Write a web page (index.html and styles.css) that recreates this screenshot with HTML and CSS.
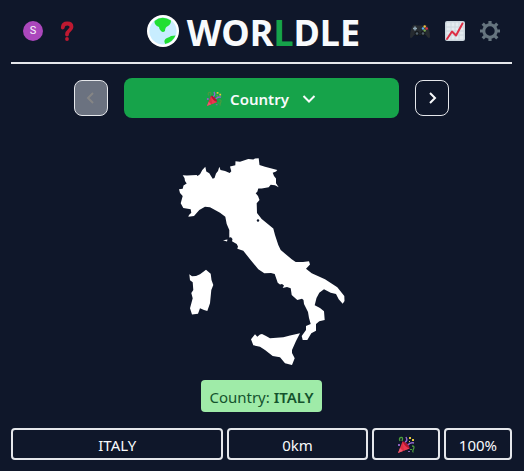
FILE: index.html
```html
<!DOCTYPE html>
<html lang="en">
<head>
<meta charset="utf-8">
<meta name="viewport" content="width=device-width, initial-scale=1">
<title>Worldle</title>
<link rel="stylesheet" href="styles.css">
</head>
<body>
<svg class="defs" aria-hidden="true">
  <symbol id="party" viewBox="0 0 18 18">
    <path d="M1 17 5.500 5.500Q10 8 12.500 12.500Z" fill="#dd2e44"/>
    <path d="M1 17 3 12 6 15Z" fill="#ea596e"/>
    <path d="M5.500 5.500Q8 5 10.500 8T12.500 12.500Q9 12 7 9T5.500 5.500" fill="#b4152f"/>
    <path d="M5.500 5.500 7 14.500 12.500 12.500Q8 11 5.500 5.500" fill="#ea3850"/>
    <path d="M3 5Q1.500 2 4 1.500T5 5M15 10q3 0 1.500 3t0 3" fill="none" stroke="#4b9b3f" stroke-width="1.300"/>
    <path d="M8 6Q11 5 9 1M11 9q2-3 6-2" fill="none" stroke="#9266cc" stroke-width="1.500"/>
    <path d="M12 1h2v2h-2zM15 3h2v2h-2zM12 5h1v1h-1z" fill="#e5c83c"/>
    <path d="M1 8h2v2H1zM11 15h2v1h-2z" fill="#8b62bd"/>
    <path d="M13 13h2v1h-2z" fill="#4b9b3f"/>
  </symbol>
</svg>
<div class="page">
  <header class="header">
    <div class="tools">
      <button class="avatar" aria-label="Account">S</button>
      <button class="icon-button" aria-label="Help">
        <svg class="icon" viewBox="0 0 20 20"><path d="M5.800 6.500Q6 2.500 10.300 2.500Q14.500 2.500 14.500 6C14.500 9.500 10 9.300 10 13.500" fill="none" stroke="#be1931" stroke-width="3.800" stroke-linecap="round"/><circle cx="10" cy="18" r="1.900" fill="#be1931"/></svg>
      </button>
    </div>
    <h1 class="title">
      <svg class="globe" viewBox="0 0 32 32" aria-hidden="true"><circle cx="16" cy="16" r="16" fill="#fff"/><circle cx="16" cy="16" r="13.600" fill="#c8edff"/><path d="M7.500 6Q15 0 24 5.500Q24 9 21 11Q18 12 18 16Q16 18 14 16Q12 14 12 12Q7 10 7.500 6M18 28.500Q16 25 20 23Q23 22 24 21L28.500 20.500Q26 27 18 29Z" fill="#20df32"/></svg>
      <span class="wordmark">WOR<span class="accent">L</span>DLE</span>
    </h1>
    <div class="tools tools-end">
      <button class="icon-button" aria-label="Games">
        <svg class="icon" viewBox="0 0 20 20"><path d="M3 4.500Q5 2.800 7 4.500H13Q15 2.800 17 4.500Q20 9 20 16Q19 19 16 14H4Q1 19 0 16Q0 9 3 4.500" fill="#262b30"/><circle cx="7" cy="12.500" r="2.500" fill="#15191d"/><circle cx="13" cy="12.500" r="2.500" fill="#15191d"/><circle cx="7" cy="12.500" r="1.300" fill="#52606b"/><circle cx="13" cy="12.500" r="1.300" fill="#52606b"/><path d="M5 5.500V9.500M3 7.500H7" stroke="#8da4b2" stroke-width="1.500"/><circle cx="14.700" cy="5.500" r="1.200" fill="#f0bd3e"/><circle cx="13" cy="7.500" r="1.200" fill="#55acee"/><circle cx="16.700" cy="7.500" r="1.200" fill="#dd2e44"/><circle cx="14.700" cy="9.500" r="1.200" fill="#77a650"/></svg>
      </button>
      <button class="icon-button" aria-label="Statistics">
        <svg class="icon" viewBox="0 0 20 20"><rect width="20" height="20" rx="2" fill="#ccd6dd"/><path d="M1.500 1.500h17v17h-17z" fill="#e4ebef"/><path d="M6 1v18M10 1v18M14 1v18M1 6h18M1 10h18M1 14h18" stroke="#ccd6dd"/><path d="M2 18 7 10.500 11 14.500 17.500 2.500" fill="none" stroke="#dd2e44" stroke-width="2" stroke-linejoin="round" stroke-linecap="round"/></svg>
      </button>
      <button class="icon-button" aria-label="Settings">
        <svg class="icon" viewBox="0 0 20 20"><g stroke="#66757f" fill="none"><circle cx="10" cy="10" r="6.200" stroke-width="3"/><path d="M10 0v4M10 16v4M0 10h4M16 10h4M2.700 2.700l3 3M14.300 14.300l3 3M17.300 2.700l-3 3M5.700 14.300l-3 3" stroke-width="3.200"/></g></svg>
      </button>
    </div>
  </header>

  <main>
    <nav class="rounds" aria-label="Rounds">
      <button class="step" disabled aria-label="Previous round"><svg class="chevron" viewBox="0 0 16 16"><path d="M10 3 5 8l5 5"/></svg></button>
      <button class="round"><svg class="party" aria-hidden="true"><use href="#party"/></svg><span>Country</span><svg class="chevron chevron-down" viewBox="0 0 16 16" aria-hidden="true"><path d="m2.500 5 5.500 5.500 5.500-5.500"/></svg></button>
      <button class="step" aria-label="Next round"><svg class="chevron" viewBox="0 0 16 16"><path d="m6 3 5 5-5 5"/></svg></button>
    </nav>

    <svg class="map" viewBox="178 157 168 209" role="img" aria-label="Country outline">
      <path d="M179 189.300 182.700 188.700 183.500 185.500 186.700 183.500 185 181 184.500 178 182.700 175.300 187 175.500 196.700 175 197.500 176 200 174.300 202.300 170 205.300 166.800 206.300 171.500 209.300 173.300 212.700 178.700 214.500 178 216 173.500 218 171 219.300 166.700 220.500 170 225 171 229.700 173 231.300 171.300 230 166.500 235.300 165.300 235.500 161.300 240 161.700 248.300 159 253.300 159.500 255 158.500 258.700 158.200 259.500 165 265 166.700 277.300 170 276 171.500 272.700 172.700 274 176 276 178.500 276 183.300 278.700 187.300 275 185.300 270.700 184.700 268.700 187.300 261.700 188.500 258.300 188.500 257.300 191.700 255.700 193.300 258 196 259.500 200 256.700 203.300 257 213 261.700 219 273.300 228.500 275 235 278.300 245 280.700 250 291.700 259.300 295.700 262 303 262 309 261.300 310 264.500 306 268.700 311.700 273.300 325 279.300 337.300 287.300 344.300 296 344.500 301 342.700 303.700 338.700 299.300 336 294 330.700 292.700 324 289.300 319.300 292.700 316.500 298 314.700 305.300 320 308 324 311.300 324.700 320 319.300 321.300 316 324 316 330.700 311.300 333.300 307.300 340 302.700 340 301.700 336 306 330 306 326 310.700 324 309 318 308 312 304 304 303.500 300 302 298.700 297.300 300 291.700 295 290.700 288.300 287 287 282.700 288 284 285.500 282 284 280 284.500 277.700 282.700 274.700 274 271 273 264.300 273.300 258.300 269.300 250 259.300 243.300 250.700 237.300 248.700 238 246.500 236.700 244 232 241.300 232.500 239 231 237.300 229.300 237.500 229.300 230 226.700 224 225.300 216.700 220 212.700 210 207.300 205 206.700 199.300 210 194 216 188.300 216.700 189 215 191.300 212.700 190.700 209.300 183.300 208 180.700 203.300 182.700 196 180 193ZM189.300 274.300 192 276.300 196 276 200 274.300 206 269.700 210.700 273.700 211.500 280 213.300 285 211.300 290 210 303.300 207.300 311 204 310 200 308.300 198 313.700 192 314.500 190 308.300 192.700 298.300 191.300 293 193.300 290 192.700 282.300 190 280.300ZM251 339.300 255 334.300 257.300 336.700 260 334.500 262 334 266 336 270 338.300 283.300 337.300 290 335.500 300 333.300 296 341 292 350 292 353 294.700 358.300 292 365 285 363.300 280 357.300 272.700 356 265 350 260 346.700 253.300 345.300ZM223 240.300 227.500 239.500 227 241.500Z"/>
      <circle class="map-hole" cx="258" cy="220.500" r="1.200"/>
    </svg>

    <p class="answer">Country: <b>ITALY</b></p>

    <div class="guess">
      <div class="cell place">ITALY</div>
      <div class="cell distance">0km</div>
      <div class="cell"><svg class="party party-large" role="img" aria-label="Correct"><use href="#party"/></svg></div>
      <div class="cell">100%</div>
    </div>
  </main>
</div>
</body>
</html>
```

FILE: styles.css
```css
* {
  box-sizing: border-box;
}

body {
  margin: 0;
  background: #0f172a;
  color: #f8fafc;
  font: 15px/24px "Noto Sans", "Open Sans", sans-serif;
}

button {
  margin: 0;
  padding: 0;
  border: 0;
  background: none;
  color: inherit;
  font: inherit;
  cursor: pointer;
}

svg {
  display: block;
}

.defs {
  position: absolute;
  width: 0;
  height: 0;
}

.page {
  padding: 0 12px 0 11px;
}

.header {
  display: grid;
  grid-template-columns: 1fr auto 1fr;
  align-items: center;
  height: 64px;
  border-bottom: 2px solid #e5e7eb;
}

.tools {
  display: flex;
  align-items: center;
  gap: 14px;
  padding: 0 12px;
}

.tools-end {
  justify-content: flex-end;
  gap: 15px;
}

.avatar {
  width: 20px;
  height: 20px;
  border-radius: 50%;
  background: #ab47bc;
  font: 11px/20px Roboto, sans-serif;
}

.icon {
  width: 20px;
  height: 20px;
}

.title {
  display: flex;
  align-items: center;
  gap: 8px;
  margin: 0;
  padding-right: 16px;
  font-size: 36px;
  line-height: 40px;
  font-weight: 700;
}

.wordmark {
  padding-top: 4px;
}

.globe {
  width: 32px;
  height: 32px;
}

.accent {
  color: #16a34a;
}

.rounds {
  display: flex;
  align-items: center;
  justify-content: center;
  gap: 16px;
  margin-top: 14px;
}

.step {
  display: grid;
  place-items: center;
  width: 34px;
  height: 36px;
  border: 1px solid #e5e7eb;
  border-radius: 8px;
}

.step:disabled {
  background: #6b7280;
  color: #858585;
}

.round {
  display: flex;
  align-items: center;
  justify-content: center;
  gap: 8px;
  width: 55%;
  height: 40px;
  padding-top: 2px;
  border-radius: 8px;
  background: #16a34a;
  font-weight: 600;
}

.chevron {
  width: 16px;
  height: 16px;
  fill: none;
  stroke: currentColor;
  stroke-width: 2;
}

.chevron-down {
  margin-left: 4px;
}

.party {
  width: 16px;
  height: 16px;
}

.party-large {
  width: 18px;
  height: 18px;
}

.map {
  width: 168px;
  height: 209px;
  margin: 39px auto 14px;
  fill: #fff;
}

.map-hole {
  fill: #0f172a;
}

.answer {
  width: fit-content;
  margin: 0 auto;
  padding: 5px 8px 3px;
  border-radius: 4px;
  background: #9feba8;
  color: #14532d;
}

.answer b {
  font-weight: 600;
}

.guess {
  display: grid;
  grid-template-columns: repeat(7, 1fr);
  gap: 4px;
  margin-top: 16px;
}

.cell {
  display: flex;
  align-items: center;
  justify-content: center;
  height: 32px;
  padding-top: 2px;
  border: 2px solid #e5e7eb;
  border-radius: 4px;
}

.place {
  grid-column: span 3;
}

.distance {
  grid-column: span 2;
}
```
